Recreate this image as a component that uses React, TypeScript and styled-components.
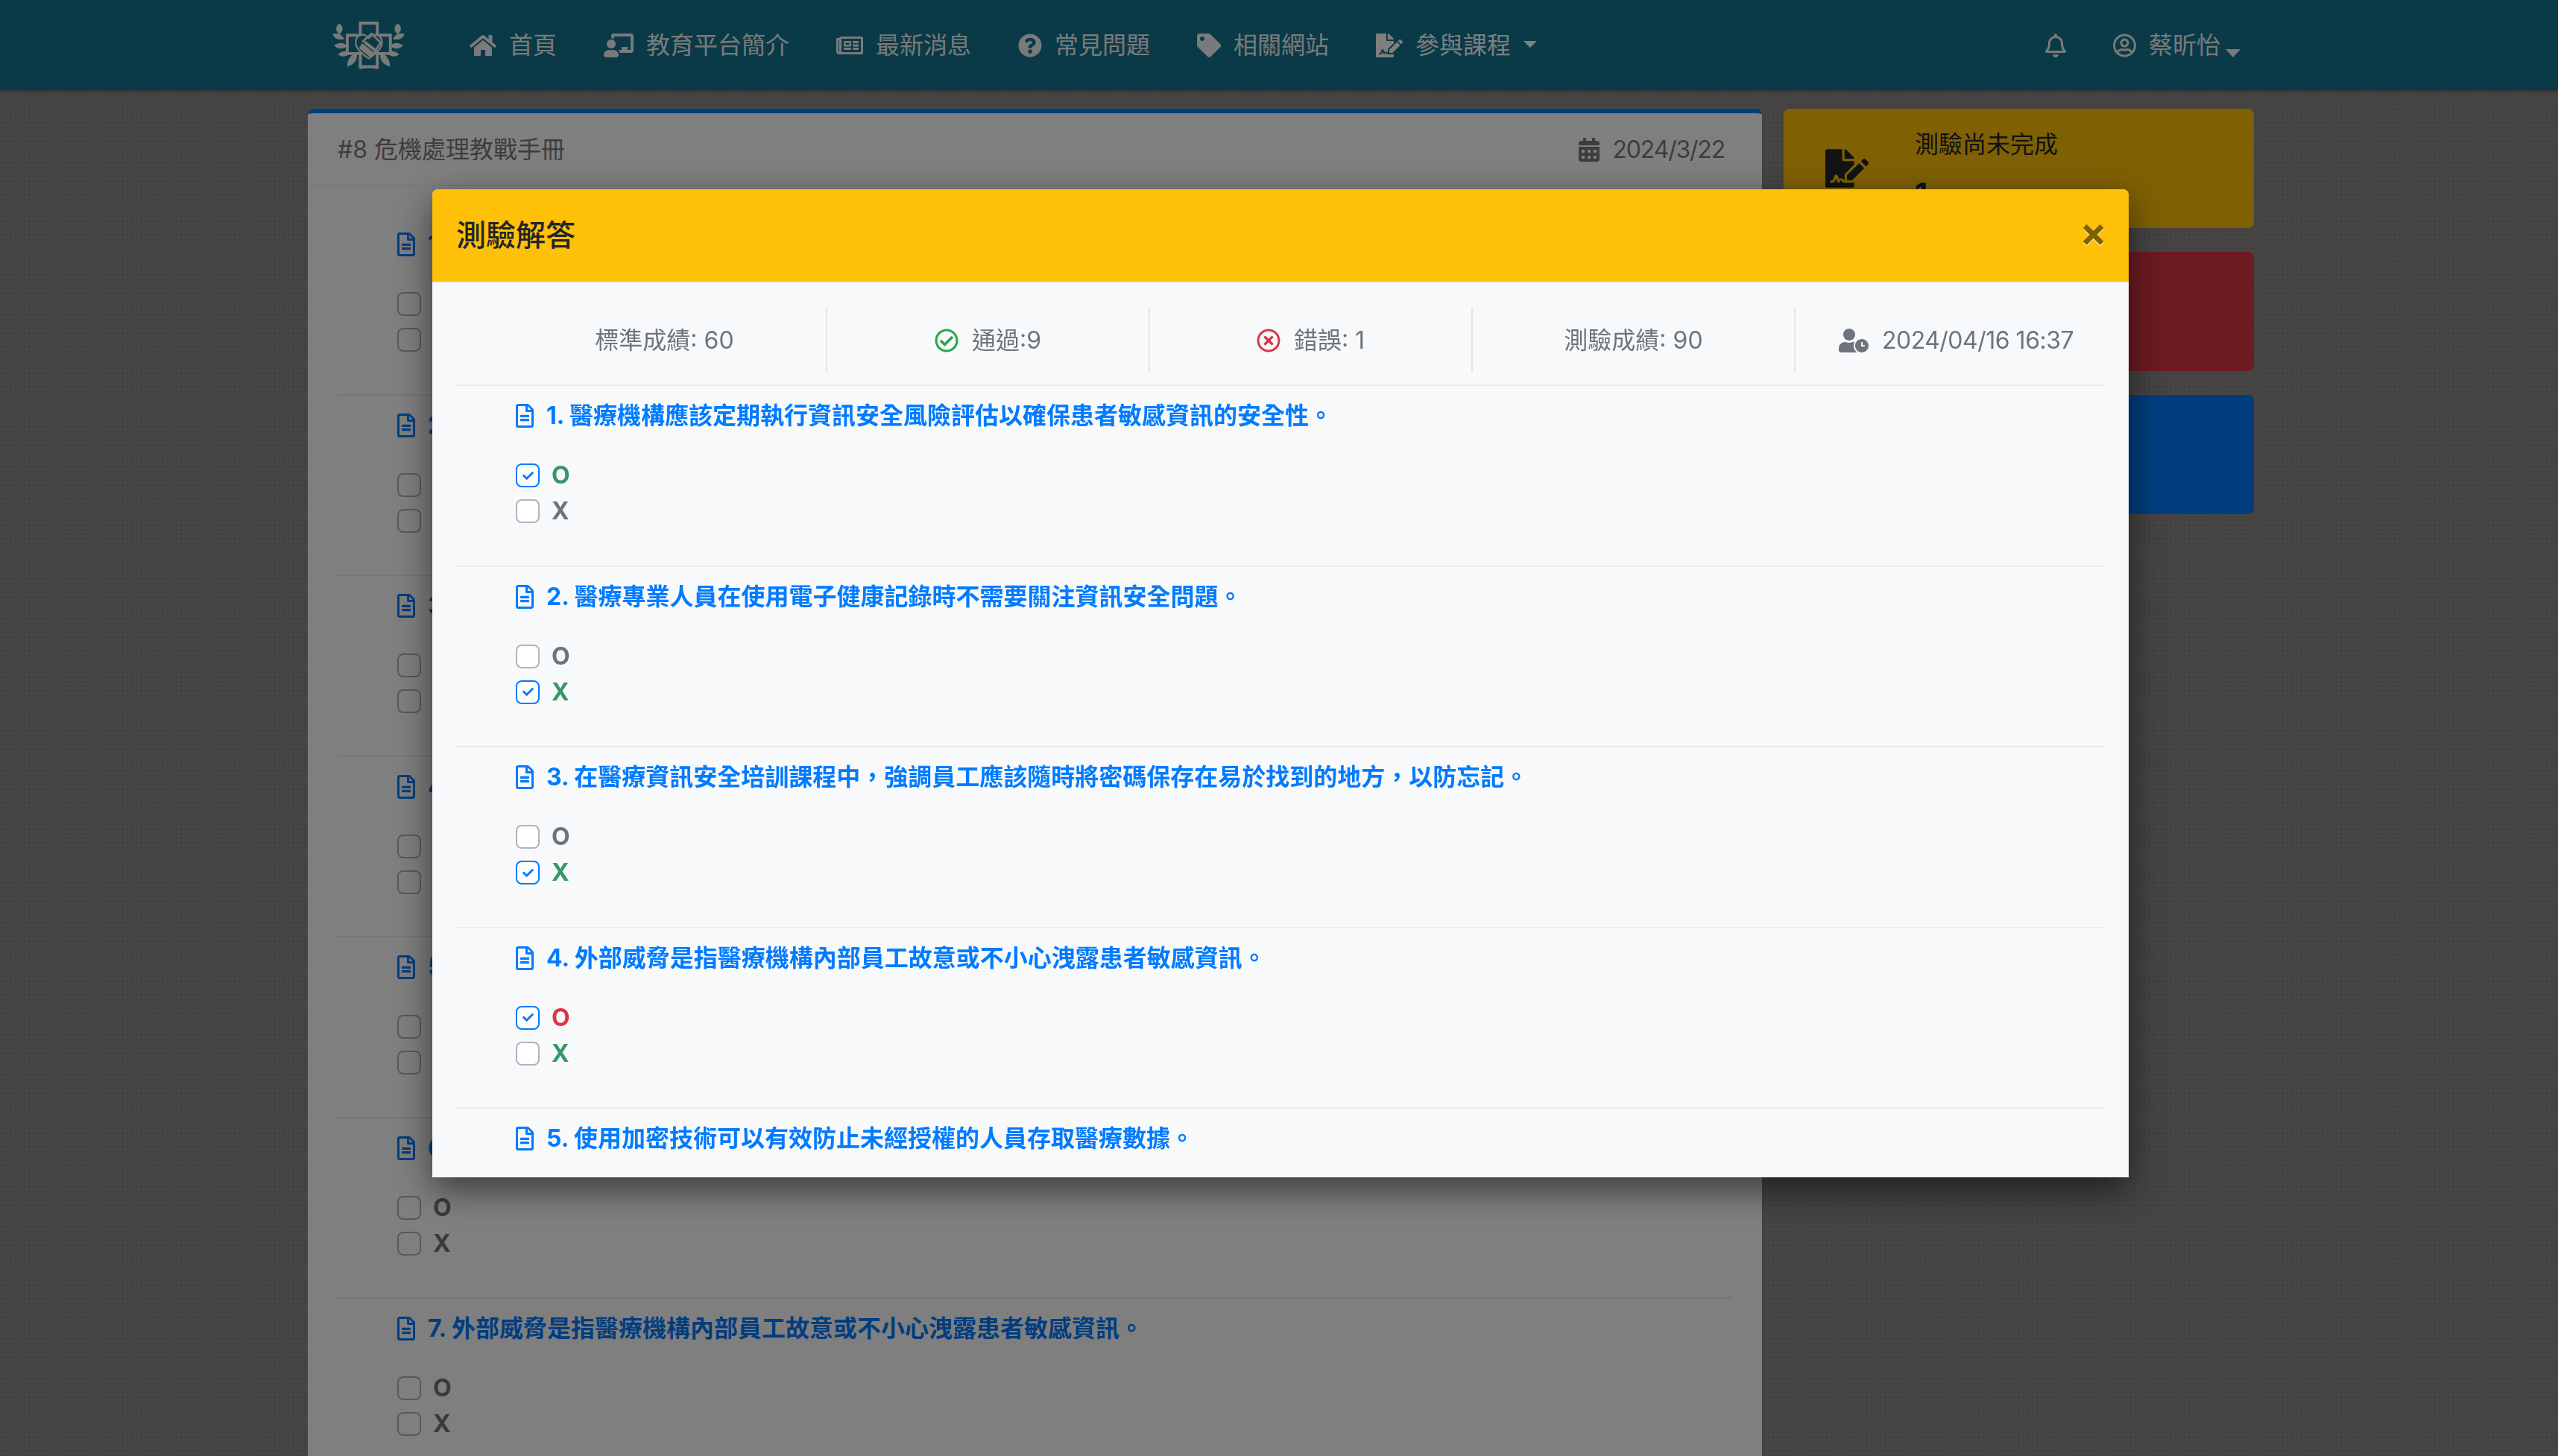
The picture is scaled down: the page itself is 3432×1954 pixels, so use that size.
import { type ReactNode } from "react";
import styled, { createGlobalStyle } from "styled-components";
import {
  FaCalendarAlt,
  FaChalkboardTeacher,
  FaCheck,
  FaFileSignature,
  FaHome,
  FaQuestionCircle,
  FaRegBell,
  FaRegCheckCircle,
  FaRegFileAlt,
  FaRegNewspaper,
  FaRegTimesCircle,
  FaRegUserCircle,
  FaTag,
  FaUserClock,
} from "react-icons/fa";

const FONT = `Inter, "Noto Sans CJK TC", "Noto Sans", sans-serif`;

const GlobalStyle = createGlobalStyle`
  html, body {
    margin: 0;
    height: 1954px;
    overflow: hidden;
    font-family: ${FONT};
    font-size: 32px;
    line-height: 48px;
    color: #212529;
  }
  * { box-sizing: border-box; }
`;

const Page = styled.div`
  height: 1954px;
  overflow: hidden;
  background-color: #8c8a88;
  background-image: radial-gradient(#7c7a78 1px, transparent 1.4px);
  background-size: 6px 6px;
`;

// font awesome glyphs are wider than 1em, so the box width is passed per icon
const Glyph = styled.span<{ $w: number; $color?: string }>`
  display: flex;
  flex: none;
  color: ${(p) => p.$color ?? "inherit"};
  svg {
    display: block;
    width: ${(p) => p.$w}px;
    height: 32px;
  }
`;

/* ---------- navbar ---------- */
const NavBar = styled.nav`
  height: 121px;
  background: #14748e;
  box-shadow: 0 2px 4px rgba(0, 0, 0, 0.25);
  display: flex;
  align-items: center;
  padding: 0 426px 0 446px;
  color: #f2f4f6;
`;

const LogoBox = styled.div`
  width: 97px;
  height: 65px;
  margin-right: 87px;
  margin-top: 1px;
  color: #f4f4f4;
  svg {
    display: block;
  }
`;

const NavList = styled.div`
  display: flex;
  align-items: center;
  gap: 63px;
  flex: 1;
`;

const NavItem = styled.div<{ $active?: boolean }>`
  display: flex;
  align-items: center;
  gap: 17px;
  white-space: nowrap;
  color: ${(p) => (p.$active ? "#ffffff" : "#f2f4f6")};
`;

const Caret = styled.span<{ $big?: boolean }>`
  display: block;
  margin-left: ${(p) => (p.$big ? "-10px" : "0")};
  margin-top: ${(p) => (p.$big ? "22px" : "-2px")};
  width: 0;
  height: 0;
  border-left: ${(p) => (p.$big ? 10 : 9)}px solid transparent;
  border-right: ${(p) => (p.$big ? 10 : 9)}px solid transparent;
  border-top: ${(p) => (p.$big ? 11 : 9)}px solid currentColor;
`;

const NavRight = styled.div`
  display: flex;
  align-items: center;
  gap: 63px;
`;

/* ---------- page behind the dialog ---------- */
const Content = styled.main`
  display: grid;
  grid-template-columns: 1951px 631px;
  gap: 29px;
  padding: 25px 0 0 413px;
`;

const Card = styled.section`
  background: #fff;
  border-top: 6px solid #007bff;
  border-radius: 8px 8px 0 0;
`;

const CardHeader = styled.header`
  height: 98px;
  padding: 2px 50px 0 40px;
  display: flex;
  align-items: center;
  justify-content: space-between;
  border-bottom: 2px solid #f0f0f0;
  color: #7a7a7a;
`;

const DateLabel = styled.div`
  display: flex;
  align-items: center;
  gap: 18px;
`;

const Digits = styled.span<{ $tight?: boolean }>`
  letter-spacing: ${(p) => (p.$tight ? "-1.2px" : "-0.5px")};
`;

const CardBody = styled.div`
  padding: 36px 40px 0;
`;

const Question = styled.article<{ $first?: boolean }>`
  border-top: 2px solid ${(p) => (p.$first ? "transparent" : "#e9ecef")};
  padding: 16px 0 48.5px 80px;
`;

const QuestionTitle = styled.h3`
  margin: 0 0 32px;
  display: flex;
  align-items: center;
  gap: 17px;
  font-size: 32px;
  line-height: 48px;
  font-weight: 700;
  color: #007bff;
  white-space: nowrap;
`;

const Option = styled.div`
  height: 48px;
  display: flex;
  align-items: center;
  gap: 16px;
`;

const Box = styled.span<{ $checked: boolean }>`
  width: 32px;
  height: 32px;
  flex: none;
  display: flex;
  align-items: center;
  justify-content: center;
  background: #fff;
  border: 2px solid ${(p) => (p.$checked ? "#007bff" : "#adb5bd")};
  border-radius: 8px;
  color: #007bff;
  svg {
    width: 15px;
    height: 15px;
  }
`;

const OptionLabel = styled.span<{ $tone: "plain" | "right" | "wrong" }>`
  font-weight: 700;
  color: ${(p) =>
    p.$tone === "right" ? "#38966a" : p.$tone === "wrong" ? "#dc3545" : "#6c757d"};
`;

const Side = styled.aside`
  display: flex;
  flex-direction: column;
  gap: 32px;
`;

const StatusCard = styled.div<{ $color: string }>`
  height: 160px;
  border-radius: 8px;
  background: ${(p) => p.$color};
  display: flex;
  gap: 62px;
  padding-left: 56px;
`;

const StatusIcon = styled.div`
  display: flex;
  align-items: center;
  svg {
    width: 58px;
    height: 52px;
  }
`;

const StatusText = styled.div`
  padding-top: 24px;
`;

const StatusCount = styled.div`
  margin-top: 18px;
  font-size: 40px;
  font-weight: 700;
`;

/* ---------- dialog ---------- */
const Backdrop = styled.div`
  position: fixed;
  inset: 0;
  background: rgba(0, 0, 0, 0.5);
  display: flex;
  justify-content: center;
  align-items: flex-start;
  padding-top: 254px;
`;

const Modal = styled.div`
  width: 2276px;
  height: 1326px;
  margin-left: 4px;
  display: flex;
  flex-direction: column;
  background: #f8f9fa;
  border-radius: 8px 8px 0 0;
  box-shadow: 0 16px 48px rgba(0, 0, 0, 0.55);
  overflow: hidden;
`;

const ModalHeader = styled.header`
  flex: none;
  height: 126px;
  padding: 0 32px 4px;
  display: flex;
  align-items: center;
  justify-content: space-between;
  background: #ffc107;
  border-bottom: 2px solid #f2efe6;
`;

const ModalTitle = styled.h2`
  margin: 3px 0 0;
  font-size: 40px;
  line-height: 60px;
  font-weight: 500;
`;

const CloseButton = styled.span`
  margin: -6px -3px 0 0;
  font-size: 54px;
  line-height: 48px;
  font-weight: 700;
  color: #000;
  opacity: 0.5;
  text-shadow: 0 2px 0 #fff;
`;

const ModalBody = styled.div`
  flex: 1;
  min-height: 0;
  overflow: hidden;
  padding: 32px 32px 0;
`;

const Stats = styled.div`
  display: grid;
  grid-template-columns: repeat(5, 433px);
  height: 88px;
  margin: 0 -16px 16px 63px;
`;

const Stat = styled.div`
  display: flex;
  align-items: center;
  justify-content: center;
  gap: 18px;
  padding-top: 2px;
  color: #6c757d;
  white-space: nowrap;
  & + & {
    border-left: 2px solid #e4e7ea;
  }
`;

/* ---------- logo ---------- */
function Leaves({ flip }: { flip?: boolean }) {
  const leaves = [
    "M28 8 C8 20 12 42 28 52 C44 40 46 22 28 8Z",
    "M0 50 C4 72 28 78 48 72 C38 54 22 44 0 50Z",
    "M6 98 C20 118 40 112 60 102 C46 86 28 84 6 98Z",
    "M22 134 C36 150 56 144 72 132 C58 118 40 120 22 134Z",
    "M60 186 C88 178 106 156 98 126 C76 136 58 158 60 186Z",
  ];
  return (
    <g transform={flip ? "translate(296 0) scale(-1 1)" : undefined}>
      {leaves.map((d) => (
        <path key={d} d={d} fill="currentColor" stroke="none" />
      ))}
    </g>
  );
}

function Logo() {
  return (
    <svg viewBox="0 0 296 200" width="97" height="65" fill="none" stroke="currentColor">
      <path
        d="M114 6 H184 V56 H238 V132 H184 V186 H114 V132 H60 V56 H114Z"
        strokeWidth="12"
      />
      <path
        d="M149 152 C108 126 90 100 96 76 C102 50 132 48 149 68 C166 48 196 50 202 76 C208 100 190 126 149 152Z"
        fill="#14748e"
        strokeWidth="7"
      />
      <path
        d="M122 84 L160 50 L198 86 L170 130"
        fill="none"
        strokeWidth="8"
      />
      <path d="M122 98 L168 134 M136 88 L180 122 M116 108 L156 140" strokeWidth="13" strokeLinecap="round" />
      <Leaves />
      <Leaves flip />
      <path d="M106 176 C128 194 168 194 190 176 L184 198 C168 188 128 188 112 198Z" fill="currentColor" stroke="none" />
    </svg>
  );
}

/* ---------- data ---------- */
type Pick = "O" | "X" | null;

interface QuestionData {
  title: string;
  pick: Pick;
  answer: Pick;
}

const BACK_QUESTIONS: QuestionData[] = [
  { title: "1. 醫療機構應該定期執行資訊安全風險評估以確保患者敏感資訊的安全性。", pick: null, answer: null },
  { title: "2. 醫療專業人員在使用電子健康記錄時不需要關注資訊安全問題。", pick: null, answer: null },
  { title: "3. 在醫療資訊安全培訓課程中，強調員工應該隨時將密碼保存在易於找到的地方，以防忘記。", pick: null, answer: null },
  { title: "4. 外部威脅是指醫療機構內部員工故意或不小心洩露患者敏感資訊。", pick: null, answer: null },
  { title: "5. 使用加密技術可以有效防止未經授權的人員存取醫療數據。", pick: null, answer: null },
  { title: "6. 使用加密技術可以有效防止未經授權的人員存取醫療數據。", pick: null, answer: null },
  { title: "7. 外部威脅是指醫療機構內部員工故意或不小心洩露患者敏感資訊。", pick: null, answer: null },
];

const MODAL_QUESTIONS: QuestionData[] = [
  { title: BACK_QUESTIONS[0].title, pick: "O", answer: "O" },
  { title: BACK_QUESTIONS[1].title, pick: "X", answer: "X" },
  { title: BACK_QUESTIONS[2].title, pick: "X", answer: "X" },
  { title: BACK_QUESTIONS[3].title, pick: "O", answer: "X" },
  { title: BACK_QUESTIONS[4].title, pick: "O", answer: "O" },
];

function optionTone(q: QuestionData, value: "O" | "X") {
  if (q.answer === value) return "right" as const;
  if (q.pick === value) return "wrong" as const;
  return "plain" as const;
}

function QuestionRow({ q, first }: { q: QuestionData; first?: boolean }) {
  return (
    <Question $first={first}>
      <QuestionTitle>
        <Glyph $w={24}>
          <FaRegFileAlt />
        </Glyph>
        {q.title}
      </QuestionTitle>
      {(["O", "X"] as const).map((value) => (
        <Option key={value}>
          <Box $checked={q.pick === value}>{q.pick === value && <FaCheck />}</Box>
          <OptionLabel $tone={optionTone(q, value)}>{value}</OptionLabel>
        </Option>
      ))}
    </Question>
  );
}

function Item({
  icon,
  width,
  children,
  active,
}: {
  icon: ReactNode;
  width: number;
  children?: ReactNode;
  active?: boolean;
}) {
  return (
    <NavItem $active={active}>
      <Glyph $w={width}>{icon}</Glyph>
      {children}
    </NavItem>
  );
}

export default function App() {
  return (
    <>
      <GlobalStyle />
      <Page>
        <NavBar>
          <LogoBox>
            <Logo />
          </LogoBox>
          <NavList>
            <Item icon={<FaHome />} width={36}>首頁</Item>
            <Item icon={<FaChalkboardTeacher />} width={40}>教育平台簡介</Item>
            <Item icon={<FaRegNewspaper />} width={36}>最新消息</Item>
            <Item icon={<FaQuestionCircle />} width={32}>常見問題</Item>
            <Item icon={<FaTag />} width={32}>相關網站</Item>
            <Item icon={<FaFileSignature />} width={36} active>
              參與課程
              <Caret />
            </Item>
          </NavList>
          <NavRight>
            <Item icon={<FaRegBell />} width={28} />
            <Item icon={<FaRegUserCircle />} width={31}>
              蔡昕怡
              <Caret $big />
            </Item>
          </NavRight>
        </NavBar>
        <Content>
          <Card>
            <CardHeader>
              <span>#8 危機處理教戰手冊</span>
              <DateLabel>
                <Glyph $w={28}>
                  <FaCalendarAlt />
                </Glyph>
                <Digits $tight>2024/3/22</Digits>
              </DateLabel>
            </CardHeader>
            <CardBody>
              {BACK_QUESTIONS.map((q, i) => (
                <QuestionRow key={q.title + i} q={q} first={i === 0} />
              ))}
            </CardBody>
          </Card>
          <Side>
            <StatusCard $color="#ffc107">
              <StatusIcon>
                <FaFileSignature />
              </StatusIcon>
              <StatusText>
                測驗尚未完成
                <StatusCount>1</StatusCount>
              </StatusText>
            </StatusCard>
            <StatusCard $color="#dc3545" />
            <StatusCard $color="#007bff" />
          </Side>
        </Content>
      </Page>
      <Backdrop>
        <Modal>
          <ModalHeader>
            <ModalTitle>測驗解答</ModalTitle>
            <CloseButton>×</CloseButton>
          </ModalHeader>
          <ModalBody>
            <Stats>
              <Stat>標準成績: 60</Stat>
              <Stat>
                <Glyph $w={32} $color="#28a745">
                  <FaRegCheckCircle />
                </Glyph>
                通過:9
              </Stat>
              <Stat>
                <Glyph $w={32} $color="#dc3545">
                  <FaRegTimesCircle />
                </Glyph>
                錯誤: 1
              </Stat>
              <Stat>測驗成績: 90</Stat>
              <Stat>
                <Glyph $w={40} $color="#6c757d">
                  <FaUserClock />
                </Glyph>
                <Digits>2024/04/16 16:37</Digits>
              </Stat>
            </Stats>
            {MODAL_QUESTIONS.map((q) => (
              <QuestionRow key={q.title} q={q} />
            ))}
          </ModalBody>
        </Modal>
      </Backdrop>
    </>
  );
}
